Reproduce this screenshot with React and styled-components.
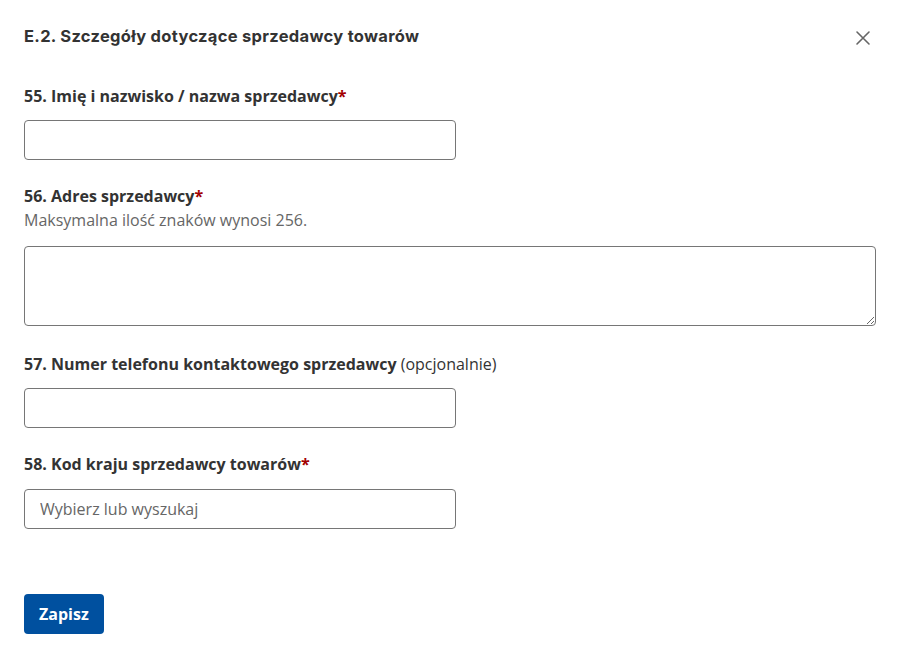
import styled, { createGlobalStyle } from 'styled-components'

const GlobalStyle = createGlobalStyle`
  html, body {
    margin: 0;
    padding: 0;
    background: #ffffff;
  }
  * {
    box-sizing: border-box;
  }
`

const Modal = styled.div`
  width: 900px;
  min-height: 656px;
  background: #ffffff;
  padding: 24px 24px 22px;
  font-family: 'Open Sans', 'Noto Sans', sans-serif;
  color: #333333;
`

const ModalHeader = styled.header`
  display: flex;
  align-items: center;
  justify-content: space-between;
  height: 24px;
  margin-bottom: 36px;
`

const ModalTitle = styled.h2`
  margin: 0;
  font-family: Inter, 'Open Sans', sans-serif;
  font-size: 16.5px;
  font-weight: 700;
  letter-spacing: 0.3px;
  color: #333333;
`

const CloseButton = styled.button`
  display: flex;
  align-items: center;
  justify-content: center;
  width: 24px;
  height: 24px;
  margin-right: 1px;
  margin-top: 4px;
  padding: 0;
  border: none;
  background: transparent;
  color: #666666;
  cursor: pointer;
`

const Field = styled.div`
  display: flex;
  flex-direction: column;
  margin-bottom: ${p => p.$gap ?? 24}px;
`

const Label = styled.label`
  font-size: 16px;
  line-height: 24px;
  font-weight: 700;
  color: #333333;
`

const Required = styled.span`
  color: #a30000;
`

const Optional = styled.span`
  font-weight: 400;
`

const Hint = styled.span`
  font-size: 16px;
  line-height: 24px;
  color: #666666;
`

const TextInput = styled.input`
  width: 432px;
  height: 40px;
  margin-top: ${p => p.$offset || 12}px;
  padding: 0 15px;
  border: 1px solid #767676;
  border-radius: 4px;
  font-family: 'Open Sans', sans-serif;
  font-size: 16px;
  color: #333333;
  background: #ffffff;
  outline: none;

  &::placeholder {
    color: #666666;
  }
`

const TextArea = styled.textarea`
  display: block;
  width: 852px;
  height: 80px;
  margin-top: 14px;
  padding: 8px 15px;
  border: 1px solid #767676;
  border-radius: 4px;
  font-family: 'Open Sans', sans-serif;
  font-size: 16px;
  color: #333333;
  resize: vertical;
  outline: none;
`

const Actions = styled.div`
  display: flex;
  margin-top: 65px;
`

const PrimaryButton = styled.button`
  height: 40px;
  padding: 0 15px;
  border: none;
  border-radius: 4px;
  background: #00509f;
  color: #ffffff;
  font-family: 'Open Sans', sans-serif;
  font-size: 16px;
  font-weight: 700;
  cursor: pointer;
`

const CloseIcon = () => (
  <svg width='16' height='16' viewBox='0 0 16 16' fill='none'>
    <path d='M2 2 L14 14 M14 2 L2 14' stroke='currentColor' strokeWidth='1.6' strokeLinecap='round' />
  </svg>
)

const App = () => {
  return (
    <Modal>
      <GlobalStyle />
      <ModalHeader>
        <ModalTitle>E.2. Szczegóły dotyczące sprzedawcy towarów</ModalTitle>
        <CloseButton aria-label='Zamknij'><CloseIcon /></CloseButton>
      </ModalHeader>

      <Field>
        <Label>55. Imię i nazwisko / nazwa sprzedawcy<Required>*</Required></Label>
        <TextInput type='text' />
      </Field>

      <Field $gap={26}>
        <Label>56. Adres sprzedawcy<Required>*</Required></Label>
        <Hint>Maksymalna ilość znaków wynosi 256.</Hint>
        <TextArea />
      </Field>

      <Field>
        <Label>57. Numer telefonu kontaktowego sprzedawcy <Optional>(opcjonalnie)</Optional></Label>
        <TextInput type='text' />
      </Field>

      <Field $gap={0}>
        <Label>58. Kod kraju sprzedawcy towarów<Required>*</Required></Label>
        <TextInput type='text' placeholder='Wybierz lub wyszukaj' $offset={13} />
      </Field>

      <Actions>
        <PrimaryButton>Zapisz</PrimaryButton>
      </Actions>
    </Modal>
  )
}

export default App
